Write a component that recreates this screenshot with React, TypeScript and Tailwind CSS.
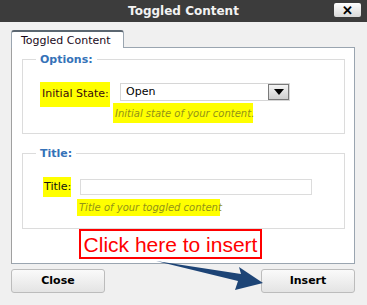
import React from 'react';

const font = { fontFamily: '"DejaVu Sans", Verdana, sans-serif' };

const App: React.FC = () => {
  return (
    <div className="relative w-[367px] h-[305px] bg-[#f0f0f0] overflow-hidden" style={font}>
      {/* title bar */}
      <div className="relative h-[22px] bg-[#3c3c3c] flex items-center justify-center">
        <span className="text-[12px] font-bold text-[#f2f2f2] leading-none">Toggled Content</span>
        <div className="absolute left-[334px] top-[3px] w-[27px] h-[14px] rounded-[2px] bg-gradient-to-b from-white to-[#d8d8d8] flex items-center justify-center">
          <span className="text-[13px] font-bold text-black leading-none" style={{ fontFamily: '"Liberation Sans", Arial, sans-serif' }}>✕</span>
        </div>
      </div>

      <div className="px-[11px] pt-[8px]">
        {/* tab */}
        <div className="flex">
          <div className="h-[18px] w-[113px] bg-white border-x border-[#9aa5b0] border-t-2 border-t-[#5b6670] rounded-t-[3px] -mb-px relative z-10 flex items-center pl-[9px]">
            <span className="text-[11px] text-[#1a0a1a] leading-none">Toggled Content</span>
          </div>
        </div>

        {/* panel */}
        <div className="h-[217px] w-[344px] bg-white border border-[#9aa5b0] border-l-[#a0a0a0] pt-[5px] pl-[10px] pr-[9px]">
          <fieldset className="border border-[#dcdcdc] pl-[17px] pb-[10px]">
            <legend className="-ml-[4px] px-[4px] text-[11px] font-bold text-[#3572b8] leading-[13px]">Options:</legend>
            <div className="flex items-start pt-[16px]">
              <div className="h-[25px] w-[70px] bg-[#ffff00] flex items-center pl-[2px]">
                <span className="text-[11px] text-[#3a0d0d] whitespace-nowrap">Initial State:</span>
              </div>
              <div className="ml-[3px] flex flex-col">
                <div className="ml-[7px] mt-[1px] h-[18px] w-[170px] border border-[#d6d6d6] flex items-center justify-between">
                  <span className="pl-[5px] text-[11px] text-black">Open</span>
                  <div className="h-[16px] w-[21px] border border-[#7a7a7a] bg-gradient-to-b from-[#f4f4f4] to-[#cfcfcf] flex items-center justify-center">
                    <svg width="10" height="6" viewBox="0 0 10 6"><path d="M0 0h10L5 6z" fill="#000" /></svg>
                  </div>
                </div>
                <div className="mt-[2px] h-[20px] w-[140px] bg-[#ffff00] flex items-center pl-[2px]">
                  <span className="text-[10px] italic text-[#929218] whitespace-nowrap">Initial state of your content.</span>
                </div>
              </div>
            </div>
          </fieldset>

          <fieldset className="mt-[13px] border border-[#dcdcdc] pl-[20px] pb-[12px]">
            <legend className="-ml-[7px] px-[4px] text-[11px] font-bold text-[#3572b8] leading-[13px]">Title:</legend>
            <div className="flex items-start pt-[17px]">
              <div className="h-[20px] w-[28px] bg-[#ffff00] flex items-center pl-[1px]">
                <span className="text-[11px] text-[#111]">Title:</span>
              </div>
              <div className="ml-[6px] flex flex-col">
                <div className="ml-[3px] mt-[2px] h-[16px] w-[232px] border border-[#dcdcdc]" />
                <div className="mt-[4px] h-[17px] w-[143px] bg-[#ffff00] flex items-center pl-[2px]">
                  <span className="text-[10px] italic text-[#929218] whitespace-nowrap">Title of your toggled content</span>
                </div>
              </div>
            </div>
          </fieldset>
        </div>

        {/* buttons */}
        <div className="mt-[5px] flex justify-between w-[344px]">
          <button className="h-[24px] w-[94px] rounded-[3px] border border-[#bcbcbc] bg-gradient-to-b from-[#fafafa] to-[#e4e4e4] text-[11px] font-bold text-black">Close</button>
          <button className="h-[24px] w-[94px] rounded-[3px] border border-[#bcbcbc] bg-gradient-to-b from-[#fafafa] to-[#e4e4e4] text-[11px] font-bold text-black">Insert</button>
        </div>
      </div>

      {/* annotation */}
      <div className="absolute left-[79px] top-[229px] w-[183px] h-[30px] border-2 border-[#ff0000] bg-white flex items-center justify-center">
        <span className="text-[21px] text-[#ff0000] leading-none" style={{ fontFamily: '"Liberation Sans", Arial, sans-serif' }}>Click here to insert</span>
      </div>
      <svg className="absolute left-0 top-0" width="367" height="305" viewBox="0 0 367 305">
        <path d="M156 261 L241 274 L239 267 L263 283 L235 290 L238 281 Z" fill="#1d4476" />
      </svg>
    </div>
  );
};

export default App;
